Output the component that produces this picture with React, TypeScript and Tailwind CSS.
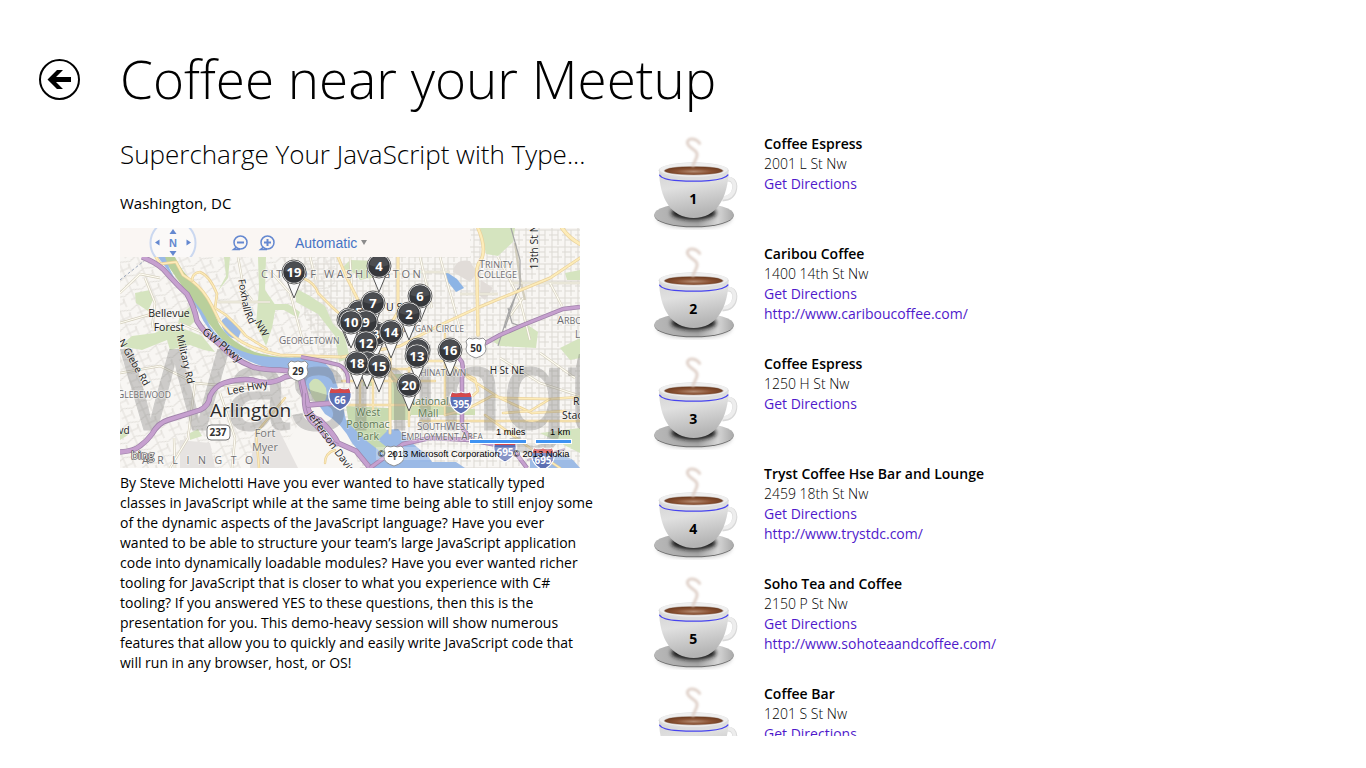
import React from "react";

type Shop = { name: string; address: string; url?: string };

const shops: Shop[] = [
  { name: "Coffee Espress", address: "2001 L St Nw" },
  { name: "Caribou Coffee", address: "1400 14th St Nw", url: "http://www.cariboucoffee.com/" },
  { name: "Coffee Espress", address: "1250 H St Nw" },
  { name: "Tryst Coffee Hse Bar and Lounge", address: "2459 18th St Nw", url: "http://www.trystdc.com/" },
  { name: "Soho Tea and Coffee", address: "2150 P St Nw", url: "http://www.sohoteaandcoffee.com/" },
  { name: "Coffee Bar", address: "1201 S St Nw" },
];

const description = `By Steve Michelotti Have you ever wanted to have statically typed
classes in JavaScript while at the same time being able to still enjoy some
of the dynamic aspects of the JavaScript language? Have you ever
wanted to be able to structure your team’s large JavaScript application
code into dynamically loadable modules? Have you ever wanted richer
tooling for JavaScript that is closer to what you experience with C#
tooling? If you answered YES to these questions, then this is the
presentation for you. This demo-heavy session will show numerous
features that allow you to quickly and easily write JavaScript code that
will run in any browser, host, or OS!`;

type Pin = { x: number; y: number; label: string };

const pins: Pin[] = [
  { x: 174, y: 44, label: "19" },
  { x: 259, y: 38, label: "4" },
  { x: 300, y: 68, label: "6" },
  { x: 239, y: 84, label: "5" },
  { x: 253, y: 75, label: "7" },
  { x: 289, y: 86, label: "2" },
  { x: 256, y: 106, label: "3" },
  { x: 229, y: 92, label: "8" },
  { x: 246, y: 94, label: "9" },
  { x: 231, y: 94, label: "10" },
  { x: 271, y: 104, label: "14" },
  { x: 246, y: 115, label: "12" },
  { x: 330, y: 122, label: "16" },
  { x: 298, y: 122, label: "1" },
  { x: 297, y: 128, label: "13" },
  { x: 247, y: 135, label: "17" },
  { x: 237, y: 135, label: "18" },
  { x: 259, y: 138, label: "15" },
  { x: 289, y: 157, label: "20" },
];

function Road({ d, w = 3 }: { d: string; w?: number }) {
  return (
    <g fill="none" strokeLinejoin="round" strokeLinecap="round">
      <path d={d} stroke="#e9d09a" strokeWidth={w} />
      <path d={d} stroke="#fdecb9" strokeWidth={w - 1.3} />
    </g>
  );
}

function Highway({ d, w = 5.5 }: { d: string; w?: number }) {
  return (
    <g fill="none" strokeLinejoin="round">
      <path d={d} stroke="#a184ab" strokeWidth={w} />
      <path d={d} stroke="#c6a0cf" strokeWidth={w - 1.6} />
    </g>
  );
}

function MapPin({ x, y, label }: Pin) {
  return (
    <g transform={`translate(${x} ${y})`}>
      <path d="M-7 9 L0 26 L7 9 Z" fill="#fafafa" stroke="#555" strokeWidth="1" />
      <circle r="12" fill="#fff" stroke="#555" strokeWidth="0.9" />
      <circle r="10.8" fill="#35373b" />
      <path d="M-9.5 -1 A9.5 9.5 0 0 1 9.5 -1 Q0 3 -9.5 -1Z" fill="#4b4d51" />
      <text y="4.5" textAnchor="middle" fontSize="13" fontWeight="700" fill="#fff">
        {label}
      </text>
    </g>
  );
}

function Interstate({ x, y, label }: Pin) {
  return (
    <g transform={`translate(${x} ${y})`}>
      <path d="M-9 -10 Q-5 -8 0 -10 Q5 -8 9 -10 Q13 -4 10 3 Q7 9 0 12 Q-7 9 -10 3 Q-13 -4 -9 -10Z" fill="#5c6fb3" stroke="#fff" strokeWidth="1.2" />
      <path d="M-9 -9.500 Q-5 -7.500 0 -9.500 Q5 -7.500 9 -9.500 L10.400 -5 L-10.400 -5Z" fill="#d5484a" />
      <text y="6" textAnchor="middle" fontSize="10" fontWeight="700" fill="#fff">{label}</text>
    </g>
  );
}

function RouteShield({ x, y, label }: Pin) {
  return (
    <g transform={`translate(${x} ${y})`}>
      <path d="M-7 -10 Q-3 -8 0 -10 Q3 -8 7 -10 L10 -7 Q8 -3 10 1 Q10 7 0 10 Q-10 7 -10 1 Q-8 -3 -10 -7Z" fill="#fff" stroke="#8a8a8a" strokeWidth="0.9" />
      <text y="4" textAnchor="middle" fontSize="10" fontWeight="700" fill="#333">{label}</text>
    </g>
  );
}

function AreaMap() {
  return (
    <svg viewBox="0 0 460 240" className="block h-full w-full" role="img" aria-label="Map of Washington, DC" fontFamily="'Open Sans', sans-serif">
      <defs>
        <pattern id="blocks" width="19" height="15" patternUnits="userSpaceOnUse" patternTransform="rotate(-24)">
          <path d="M0 3Q6 0 10 3T19 3M0 10H11L13 6M4 0V15M12 6V15" stroke="#e1ded9" strokeWidth="1" fill="none" />
        </pattern>
        <pattern id="grid" width="13" height="17" patternUnits="userSpaceOnUse">
          <path d="M0 2H13M0 7H9M3 12H13M3 0V17M9 2V17" stroke="#dcd9d3" strokeWidth="1" fill="none" />
        </pattern>
      </defs>
      <rect width="460" height="240" fill="#f8f6f3" />
      <path d="M0 0H215V140L150 240H0Z" fill="url(#blocks)" />
      <path d="M150 0H460V240H240L205 140Z" fill="url(#grid)" />
      <path d="M135 205 L158 200 L178 240 H130Z M60 212 L90 215 L95 240 H60Z" fill="#e6e3e1" />

      <g fill="#d5e4bf">
        <path d="M15 65 L30 62 L33 72 L28 83 L16 75Z" />
        <path d="M98 63 L108 50 L110 29 L104 29 L106 48Z" />
        <path d="M60 87 L72 77 L78 90 L70 98 L58 96Z" />
        <path d="M45 105 L62 100 L82 108 L95 124 L84 122 L70 117 L50 122Z" />
        <path d="M0 118 L12 108 L35 105 L50 97 L52 110 L22 122Z" />
        <path d="M138 29 L146 29 L145 62 L156 78 L152 100 L146 118 L136 97 L139 60Z" />
        <path d="M145 76 L168 76 L180 84 L178 90 L164 82 H148Z M175 60 L190 68 L205 78 L213 96 L224 106 L230 130 L219 134 L215 108 L198 86 L176 74Z" />
        <path d="M222 40 L230 32 L262 33 L270 42 L262 48 L240 52 L236 46Z" />
        <path d="M360 0 L395 0 L393 14 L378 28 L366 26Z" />
        <path d="M371 112 L405 95 L418 104 L416 120 L380 118Z" />
        <path d="M445 45 L460 42 V52 L447 52Z" />
        <path d="M440 120 L460 110 V130 L450 132Z" />
        <path d="M70 205 L78 201 L82 208 L70 212Z" />
        <path d="M420 205 L460 200 L460 225 L440 215Z" />
        <path d="M0 204 L6 202 L8 207 L0 212Z" />
      </g>
      <g fill="#e1dcd8">
        <path d="M333 44 Q335 30 350 33 L357 45 L350 54Z" />
        <path d="M361 52 L373 60 L365 72 L360 68Z" />
      </g>
      <path d="M42 29 H55 Q62 44 73 54 Q87 66 93 82 L99 96 Q110 114 135 124 Q158 131 183 129 L180 140 L150 138 L110 122 L75 78 L60 55Z" fill="#b9cf9b" />
      <path d="M40 29 H45 Q54 55 69 68 Q82 80 90 98 Q105 120 135 127 Q160 131 190 129 Q206 132 213 145 L221 170 L226 192 L262 202 L278 201 L292 215 L308 228 L316 240 H250 Q241 225 232 215 Q222 195 205 186 L189 163 Q183 148 163 143 Q128 137 108 120 Q86 102 79 84 Q70 64 58 56 L38 29Z" fill="#9ab9e6" />
      <path d="M102 92 L106 89 Q115 96 121 103 L118 111 Q107 111 102 99Z" fill="#9dbbe5" />
      <path d="M325 43 L337 51 L344 60 L336 64 L328 54Z" fill="#8db4e5" />
      <path d="M410 232 Q435 220 453 232 L460 240H410Z M300 234H336L345 240H300Z" fill="#9dbbe5" />
      <path d="M189 156 Q196 144 206 160 Q209 175 198 176 Q190 170 189 156Z" fill="#cfe0b8" />
      <path d="M226 178 L268 180 L290 178 L291 188 L262 194 L267 203 L258 212 L280 230 L274 234 L248 214 L229 196Z" fill="#c7dab0" />
      <path d="M270 146 L286 146 L288 192 L271 192Z M291 176 L355 181 V187 L291 187Z M243 150H254V158H243Z" fill="#cfdfb4" />

      <g stroke="#d3cebd" strokeWidth="2.4" fill="none">
        <path id="lane" d="M0 65 L20 46 L40 50M25 50L35 75L32 100M118 29L124 62L132 72M150 43L170 65L182 110M98 74H150M190 29L196 52M230 29L233 85M300 29L312 80M320 29L340 100M378 29L400 72L410 112M395 15L400 50L405 72M390 55H460M340 66H378M300 44H330M430 55L442 78M385 95L403 70M0 145L40 138L75 155L130 160M54 210L55 240M100 165L115 210L112 240M75 155L68 210L50 240M60 95L95 110M0 95L35 85M380 130L420 155L460 168M420 125L455 150" />
      </g>
      <g stroke="#fffdf4" strokeWidth="1.2" fill="none">
        <path d="M0 65 L20 46 L40 50M25 50L35 75L32 100M118 29L124 62L132 72M150 43L170 65L182 110M98 74H150M190 29L196 52M230 29L233 85M300 29L312 80M320 29L340 100M378 29L400 72L410 112M390 55H460M340 66H378M300 44H330M430 55L442 78M385 95L403 70M0 145L40 138L75 155L130 160M54 210L55 240M100 165L115 210L112 240M75 155L68 210L50 240M60 95L95 110M0 95L35 85M380 130L420 155L460 168M420 125L455 150" />
      </g>
      <path d="M391 0 L400 32 L400 58 L390 80 L378 118 M388 80 L392 95 L403 99 M398 60 L385 100" stroke="#a5a5a5" strokeWidth="1.2" fill="none" />
      <path d="M0 52L24 33" stroke="#9da8bb" strokeWidth="1" strokeDasharray="3 2" />

      <Road d="M36 29 L40 36 L56 34 L63 47 L72 53 Q84 62 92 78 L99 92 Q108 105 122 114 Q138 123 160 127 L222 129" w={3} />
      <Road d="M72 53 Q72 45 80 44 Q90 48 97 66 L95 80 L106 87 Q120 100 126 108 L147 121" w={2.6} />
      <Road d="M183 50 Q195 55 198 65 L213 80 L230 95" w={2.6} />
      <Road d="M218 29 L226 48 L238 72 L246 92 L260 130 L278 154" />
      <Road d="M278 29 V84 L262 110 M270 115 V205" />
      <Road d="M222 129 L280 118 L320 97 L357 80 L430 50 L460 30" />
      <Road d="M358 0 Q366 18 362 30 Q355 38 357 52 L358 107" w={3.5} />
      <Road d="M442 0 Q449 10 460 16" w={4} />
      <Road d="M222 141 H300 M222 153 H315 M225 177 H330 M240 141 L240 180 M253 141 V182 M289 140 V198 M325 106 V187 M300 193 H460" w={2.4} />
      <Road d="M335 141 L355 151 L358 163 L348 172 M350 151 L380 170 L412 185 L445 183 M325 187 L345 182 L372 168 L383 170 L430 171 L460 169" w={2.6} />
      <Road d="M300 133 H326 L350 151 M383 185 L410 183 L430 171 M365 187 L410 220 L440 240" w={2.6} />
      <Road d="M139 240 L136 205 L165 170 M215 222 Q205 225 205 235" w={2.4} />

      <text x="0" y="202" fontFamily="'Liberation Sans', sans-serif" fontSize="116" fill="#6f6f6f" stroke="#6f6f6f" strokeWidth="1" opacity="0.31">Washingt</text>

      <Highway d="M22 29 Q35 34 43 41 Q58 58 67 66 Q74 78 77 93 Q84 105 97 114 Q114 132 133 139 Q145 142 160 142 L180 144 Q181 160 187 177 Q190 190 200 192 Q214 206 218 215 L236 223 L250 240" />
      <Highway d="M0 224 Q14 223 20 218 Q27 213 32 206 Q38 195 48 192 L80 182 Q89 178 90 168 Q95 158 104 155 Q120 150 133 152 Q150 158 165 149 Q178 145 182 151 L188 177 L213 175" />
      <Highway d="M181 129 Q200 132 219 137 Q229 142 228 155" w={4} />
      <Highway d="M184 165 Q182 188 195 197 L209 213 L218 217" w={4} />
      <Highway d="M250 240 L283 216 L310 210 L350 212 L377 217 L395 224 L407 240" w={4.5} />
      <Highway d="M336 113 Q335 127 342 134 Q344 144 342 150 V200 L352 212" w={4.5} />
      <Highway d="M362 117 L380 107 L403 97 L443 81 L460 79" w={4.5} />
      <path d="M407 232 L445 221" stroke="#b9a5bd" strokeWidth="2" />

      <g fill="#6e6d70" fontSize="10" stroke="#fff" strokeWidth="1.6" strokeOpacity="0.5" paintOrder="stroke">
        <text x="141" y="50" fontSize="11" letterSpacing="2.600">CITY OF WASHINGTON</text>
        <text x="359" y="40" fontSize="11">T<tspan fontSize="9">RINITY</tspan></text>
        <text x="357" y="50" fontSize="11">C<tspan fontSize="9">OLLEGE</tspan></text>
        <text x="437" y="96" fontSize="11">A<tspan fontSize="9">RBO</tspan></text>
        <text x="159" y="116">G<tspan fontSize="8.500">EORGETOWN</tspan></text>
        <text x="283" y="104">L<tspan fontSize="8.500">OGAN</tspan> C<tspan fontSize="8.500">IRCLE</tspan></text>
        <text x="294" y="148">C<tspan fontSize="8.500">HINATOWN</tspan></text>
        <text x="-3" y="170">G<tspan fontSize="8.500">LEBEWOOD</tspan></text>
        <text x="297" y="202">S<tspan fontSize="8.500">OUTH</tspan>W<tspan fontSize="8.500">EST</tspan></text>
        <text x="281" y="212">E<tspan fontSize="8.500">MPLOYMENT</tspan> A<tspan fontSize="8.500">REA</tspan></text>
        <text x="22" y="236" fontSize="10.500" letterSpacing="8.600">ARLINGTON</text>
        <text x="455" y="110">L</text>
      </g>
      <g fill="#5f7a55" fontSize="10.500" textAnchor="middle" stroke="#fff" strokeWidth="1.4" strokeOpacity="0.4" paintOrder="stroke">
        <text x="248" y="188">West</text>
        <text x="248" y="200">Potomac</text>
        <text x="248" y="212">Park</text>
        <text x="308" y="177">National</text>
        <text x="308" y="189">Mall</text>
        <text x="145" y="209" fontSize="11" fill="#777">Fort</text>
        <text x="145" y="223" fontSize="11" fill="#777">Myer</text>
      </g>
      <g fill="#1c1c1c" fontSize="10.500" textAnchor="middle" stroke="#fff" strokeWidth="1.4" strokeOpacity="0.4" paintOrder="stroke">
        <text x="49" y="89">Bellevue</text>
        <text x="49" y="103">Forest</text>
        <text x="387" y="146" fontSize="10">H St NE</text>
        <text x="276" y="83">U St</text>
        <text x="459" y="177">RF</text>
        <text x="453" y="191">Stad</text>
        <text transform="translate(418 14) rotate(-90)">13th St NW</text>
        <text transform="translate(121 68) rotate(80)" fontSize="10">Foxhall</text>
        <text transform="translate(127 91) rotate(65)" fontSize="10">Rd</text>
        <text transform="translate(139 102) rotate(60)" fontSize="10">NW</text>
        <text transform="translate(62 132) rotate(77)" fontSize="10">Military Rd</text>
        <text transform="translate(11 136) rotate(60)" fontSize="10">N Glebe Rd</text>
        <text transform="translate(128 163) rotate(-11)">Lee Hwy</text>
        <text transform="translate(100 120) rotate(39)" fontSize="11">GW Pkwy</text>
        <text transform="translate(208 216) rotate(54)">Jefferson Davis</text>
        <text x="4" y="206" fontSize="10">vd</text>
      </g>
      <text x="90" y="189" fontSize="19" fill="#2b2b2b" stroke="#fff" strokeWidth="2" strokeOpacity="0.45" paintOrder="stroke">Arlington</text>

      <RouteShield x={178} y={143} label="29" />
      <RouteShield x={356} y={120} label="50" />
      <RouteShield x={274} y={228} label="1" />
      <rect x="87" y="197" width="23" height="15" rx="4" fill="#fff" stroke="#777" />
      <text x="98" y="208" fontSize="10" fontWeight="700" textAnchor="middle" fill="#333">237</text>
      <Interstate x={220} y={170} label="66" />
      <Interstate x={341} y={174} label="395" />
      <Interstate x={385} y={222} label="695" />
      <Interstate x={423} y={230} label="695" />

      {pins.map((p) => (
        <MapPin key={p.label} {...p} />
      ))}

      <g>
        <rect x="256" y="219" width="195" height="13" fill="#fff" fillOpacity="0.25" />
        <rect x="349" y="211" width="58" height="5" fill="#fff" />
        <rect x="415" y="211" width="37" height="5" fill="#fff" />
        <rect x="350" y="212" width="56" height="3" fill="#3f93f2" />
        <rect x="416" y="212" width="35" height="3" fill="#3f93f2" />
        <g fontFamily="'Liberation Sans', sans-serif" fontSize="9.300" fill="#000">
          <text x="376" y="207">1 miles</text>
          <text x="430" y="207">1 km</text>
          <text x="258" y="229">© 2013 Microsoft Corporation</text>
          <text x="393" y="229">© 2013 Nokia</text>
        </g>
        <text x="11" y="231" fontSize="11.500" fill="#f4f1ee" stroke="#444" strokeWidth="1.200" paintOrder="stroke">bing</text>
      </g>
    </svg>
  );
}

function ZoomGlyph({ plus }: { plus?: boolean }) {
  return (
    <svg viewBox="0 0 18 18" className="block size-[18px]" fill="none" stroke="#6488d0" strokeWidth="1.500" aria-hidden="true">
      <circle cx="9.500" cy="8.500" r="6.500" />
      <path d="M5.500 13 L2.500 15.500 H9" />
      <path d="M6 8.500 H13" strokeWidth="2" />
      {plus && <path d="M9.500 5 V12" strokeWidth="2" />}
    </svg>
  );
}

function MapToolbar() {
  return (
    <div className="absolute top-0 left-0 flex h-[29px] w-[350px] items-center overflow-hidden bg-[#faf6f3] pl-[29px]">
      <button type="button" aria-label="Pan north" className="h-12 w-12 shrink-0">
        <svg viewBox="0 0 48 48" className="block h-12 w-12" aria-hidden="true">
          <circle cx="24" cy="24" r="22.500" fill="#fbf9f8" stroke="#cbd8f0" strokeWidth="2" />
          <g fill="#6488d0">
            <path d="M24 10 L27.500 15 H20.500Z" />
            <path d="M24 37 L27.500 32 H20.500Z" />
            <path d="M6 23.500 L10.500 20.500 V26.500Z" />
            <path d="M42 23.500 L37.500 20.500 V26.500Z" />
            <text x="24" y="28" textAnchor="middle" fontFamily="'Liberation Sans', sans-serif" fontWeight="700" fontSize="11">N</text>
          </g>
        </svg>
      </button>
      <button type="button" aria-label="Zoom out" className="ml-[34px]">
        <ZoomGlyph />
      </button>
      <button type="button" aria-label="Zoom in" className="ml-[9px]">
        <ZoomGlyph plus />
      </button>
      <button type="button" className="ml-[19px] flex items-center gap-1 font-['Liberation_Sans',sans-serif] text-sm leading-[26px] text-[#4673c4]">
        Automatic
        <svg viewBox="0 0 6 5" className="h-[5px] w-1.5" aria-hidden="true">
          <path d="M0 0H6L3 5Z" fill="#8b8b8b" />
        </svg>
      </button>
    </div>
  );
}

function CoffeeCup({ index }: { index: number }) {
  return (
    <svg viewBox="30 12 270 288" className="block h-24 w-[90px] shrink-0" role="img" aria-label={`Stop ${index}`}>
      <defs>
        <linearGradient id="saucer" x1="0" x2="1">
          <stop offset="0" stopColor="#b8b8b8" />
          <stop offset="0.55" stopColor="#a5a5a5" />
          <stop offset="0.8" stopColor="#d6d6d6" />
          <stop offset="1" stopColor="#a8a8a8" />
        </linearGradient>
        <linearGradient id="body" x1="0" x2="0.25" y1="0" y2="1">
          <stop offset="0" stopColor="#d4d4d4" />
          <stop offset="0.4" stopColor="#e0e0e0" />
          <stop offset="1" stopColor="#b4b4b4" />
        </linearGradient>
        <radialGradient id="coffee" cx="0.5" cy="0.6" r="0.55">
          <stop offset="0" stopColor="#b18a70" />
          <stop offset="0.55" stopColor="#8a5233" />
          <stop offset="1" stopColor="#6f3d21" />
        </radialGradient>
        <filter id="soft" x="-30%" y="-50%" width="160%" height="200%">
          <feGaussianBlur stdDeviation="7" />
        </filter>
        <filter id="steam" x="-50%" y="-30%" width="200%" height="160%">
          <feGaussianBlur stdDeviation="2.500" />
        </filter>
        <clipPath id="plate">
          <ellipse cx="162" cy="254" rx="120" ry="35" />
        </clipPath>
      </defs>
      <ellipse cx="163" cy="265" rx="112" ry="30" fill="#777" opacity="0.4" filter="url(#soft)" />
      <ellipse cx="162" cy="257" rx="119" ry="35" fill="#707070" />
      <ellipse cx="162" cy="254" rx="120" ry="35" fill="url(#saucer)" />
      <g clipPath="url(#plate)">
        <ellipse cx="161" cy="249" rx="68" ry="20" fill="#161616" filter="url(#soft)" />
      </g>
      <path d="M251 150 C276 140 287 158 284 176 C281 195 268 206 247 207" fill="none" stroke="#d8d8d8" strokeWidth="15" />
      <path d="M251 149 C276 139 286 157 283 175 C280 194 268 203 247 204" fill="none" stroke="#ededed" strokeWidth="11" />
      <path d="M57 120 C58 205 93 264 161 264 C229 264 264 205 266 120Z" fill="url(#body)" />
      <ellipse cx="161" cy="121" rx="105" ry="24" fill="#dedede" />
      <ellipse cx="161" cy="119" rx="102" ry="21" fill="#efefef" />
      <ellipse cx="161" cy="122" rx="90" ry="14" fill="#b8aaa2" />
      <ellipse cx="161" cy="122" rx="87" ry="12" fill="url(#coffee)" />
      <path d="M58 134 Q66 149 115 152 Q161 155 207 152 Q255 148 265 134" fill="none" stroke="#4643f0" strokeWidth="3.500" />
      <path d="M179 40 C164 20 137 25 143 42 C149 58 180 60 169 84 L159 106" fill="none" stroke="#e0d2ca" strokeWidth="9" strokeLinecap="round" filter="url(#steam)" />
      <text x="160" y="221" textAnchor="middle" fontFamily="'Open Sans', sans-serif" fontSize="42" fontWeight="700" fill="#000">{index}</text>
    </svg>
  );
}

export default function App() {
  return (
    <div className="flex h-screen flex-col overflow-hidden bg-white pb-8 font-['Open_Sans','Noto_Sans',sans-serif] text-sm leading-5 text-black">
      <header className="flex h-32 shrink-0 items-center pt-[30px] pl-[39px]">
        <button type="button" aria-label="Back" className="size-[41px] shrink-0">
          <svg viewBox="0 0 41 41" className="block size-[41px]" aria-hidden="true">
            <circle cx="20.500" cy="20.500" r="19.500" fill="none" stroke="#000" strokeWidth="2" />
            <path d="M8.500 20.500 L18 11 H24 L17 18 H32 V23 H17 L24 30 H18Z" fill="#000" />
          </svg>
        </button>
        <h1 className="ml-10 text-[53px] leading-[64px] font-light whitespace-nowrap">Coffee near your Meetup</h1>
      </header>

      <main className="flex min-h-0 grow gap-[50px] pl-[120px]">
        <section className="w-[480px] shrink-0 pt-1.5">
          <h2 className="text-[26px] leading-10 font-light whitespace-nowrap">Supercharge Your JavaScript with Type...</h2>
          <p className="mt-[19px] text-[15px]">Washington, DC</p>
          <div className="relative mt-[15px] h-60 w-[460px] overflow-hidden">
            <AreaMap />
            <MapToolbar />
          </div>
          <p className="mt-[5px] whitespace-pre-line">{description}</p>
        </section>

        <ul className="min-w-0 grow overflow-hidden pt-1.5">
          {shops.map((shop, i) => (
            <li key={i} className="flex h-[110px] gap-6">
              <CoffeeCup index={i + 1} />
              <div className="min-w-0">
                <h3 className="font-semibold">{shop.name}</h3>
                <p className="font-light">{shop.address}</p>
                <a href="#directions" className="block text-[#4f1acb]">Get Directions</a>
                {shop.url && (
                  <a href={shop.url} className="block text-[#4f1acb]">{shop.url}</a>
                )}
              </div>
            </li>
          ))}
        </ul>
      </main>
    </div>
  );
}
